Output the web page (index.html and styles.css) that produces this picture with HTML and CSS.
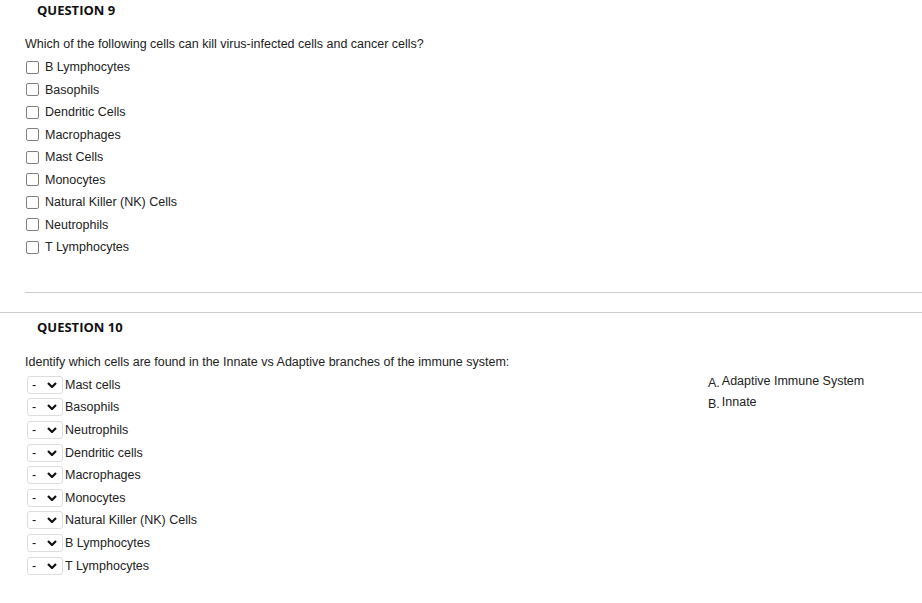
FILE: index.html
```html
<!DOCTYPE html>
<html>
<head>
<meta charset="utf-8">
<link rel="stylesheet" href="styles.css">
</head>
<body>
<section class="q q9">
  <h2 class="q-title">QUESTION 9</h2>
  <p class="q-text">Which of the following cells can kill virus-infected cells and cancer cells?</p>
  <ul class="checks">
    <li><span class="cb"></span>B Lymphocytes</li>
    <li><span class="cb"></span>Basophils</li>
    <li><span class="cb"></span>Dendritic Cells</li>
    <li><span class="cb"></span>Macrophages</li>
    <li><span class="cb"></span>Mast Cells</li>
    <li><span class="cb"></span>Monocytes</li>
    <li><span class="cb"></span>Natural Killer (NK) Cells</li>
    <li><span class="cb"></span>Neutrophils</li>
    <li><span class="cb"></span>T Lymphocytes</li>
  </ul>
</section>
<div class="rule-inner"></div>
<div class="rule-outer"></div>
<section class="q q10">
  <h2 class="q-title">QUESTION 10</h2>
  <p class="q-text">Identify which cells are found in the Innate vs Adaptive branches of the immune system:</p>
  <div class="match">
    <ul class="selects">
      <li><span class="sel"><span class="dash">-</span><svg class="chev" viewBox="0 0 10 6"><path d="M1 1 L5 5 L9 1" fill="none" stroke="#111" stroke-width="2.2"/></svg></span>Mast cells</li>
      <li><span class="sel"><span class="dash">-</span><svg class="chev" viewBox="0 0 10 6"><path d="M1 1 L5 5 L9 1" fill="none" stroke="#111" stroke-width="2.2"/></svg></span>Basophils</li>
      <li><span class="sel"><span class="dash">-</span><svg class="chev" viewBox="0 0 10 6"><path d="M1 1 L5 5 L9 1" fill="none" stroke="#111" stroke-width="2.2"/></svg></span>Neutrophils</li>
      <li><span class="sel"><span class="dash">-</span><svg class="chev" viewBox="0 0 10 6"><path d="M1 1 L5 5 L9 1" fill="none" stroke="#111" stroke-width="2.2"/></svg></span>Dendritic cells</li>
      <li><span class="sel"><span class="dash">-</span><svg class="chev" viewBox="0 0 10 6"><path d="M1 1 L5 5 L9 1" fill="none" stroke="#111" stroke-width="2.2"/></svg></span>Macrophages</li>
      <li><span class="sel"><span class="dash">-</span><svg class="chev" viewBox="0 0 10 6"><path d="M1 1 L5 5 L9 1" fill="none" stroke="#111" stroke-width="2.2"/></svg></span>Monocytes</li>
      <li><span class="sel"><span class="dash">-</span><svg class="chev" viewBox="0 0 10 6"><path d="M1 1 L5 5 L9 1" fill="none" stroke="#111" stroke-width="2.2"/></svg></span>Natural Killer (NK) Cells</li>
      <li><span class="sel"><span class="dash">-</span><svg class="chev" viewBox="0 0 10 6"><path d="M1 1 L5 5 L9 1" fill="none" stroke="#111" stroke-width="2.2"/></svg></span>B Lymphocytes</li>
      <li><span class="sel"><span class="dash">-</span><svg class="chev" viewBox="0 0 10 6"><path d="M1 1 L5 5 L9 1" fill="none" stroke="#111" stroke-width="2.2"/></svg></span>T Lymphocytes</li>
    </ul>
    <ul class="answers">
      <li><span class="lbl">A.</span>Adaptive Immune System</li>
      <li><span class="lbl">B.</span>Innate</li>
    </ul>
  </div>
</section>
</body>
</html>
```
FILE: styles.css
```css
html, body {
  margin: 0;
  padding: 0;
  background: #fff;
}
body {
  font-family: "Liberation Sans", Arial, sans-serif;
  font-size: 12.5px;
  color: #222;
  width: 922px;
  height: 603px;
  overflow: hidden;
}
ul {
  list-style: none;
  margin: 0;
  padding: 0;
}
.q-title {
  font-family: "Open Sans", sans-serif;
  font-weight: 700;
  font-size: 13px;
  color: #111;
  margin: 0;
  padding-left: 37px;
  line-height: 20px;
}
.q-text {
  margin: 0;
  padding-left: 25px;
  line-height: 16px;
}
.q9 .q-text {
  margin-top: 16px;
}
.checks {
  margin-top: 4px;
  padding-left: 26px;
}
.checks li {
  display: flex;
  align-items: center;
  height: 22.5px;
}
.cb {
  width: 11px;
  height: 11px;
  border: 1px solid #808080;
  border-radius: 2px;
  margin-right: 6px;
  box-sizing: content-box;
}
.rule-inner {
  margin: 33px 0 0 25px;
  border-top: 1px solid #ccc;
}
.rule-outer {
  margin-top: 19px;
  border-top: 1px solid #ccc;
}
.q10 .q-title {
  margin-top: 4px;
}
.q10 .q-text {
  margin-top: 17px;
}
.match {
  display: flex;
  margin-top: 4px;
}
.selects {
  width: 708px;
  padding-left: 27px;
  box-sizing: border-box;
}
.selects li {
  display: flex;
  align-items: center;
  height: 22.6px;
}
.sel {
  display: flex;
  align-items: center;
  width: 36px;
  height: 18px;
  border: 1px solid #ddd;
  border-radius: 3px;
  box-sizing: border-box;
  padding-left: 4px;
  margin-right: 2px;
  color: #111;
}
.dash {
  width: 15px;
}
.chev {
  width: 10px;
  height: 6px;
}
.answers {
  margin-top: -2px;
}
.answers li {
  height: 21px;
  line-height: 18px;
}
.lbl {
  margin-right: 2px;
  position: relative;
  top: 2px;
}
```
